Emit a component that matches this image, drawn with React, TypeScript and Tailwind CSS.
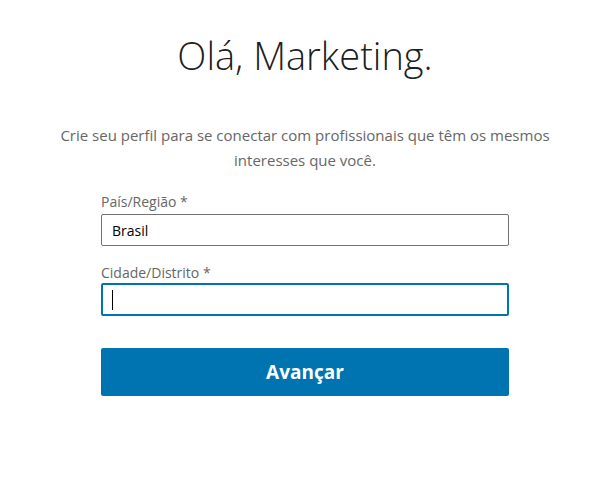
export default function App() {
  return (
    <div className="min-h-[489px] w-full bg-white font-['Open_Sans',sans-serif]">
      <div className="mx-auto flex flex-col items-center pt-[31px]">
        <h1 className="text-[38px] leading-[48px] font-light text-[#000000e6]">Olá, Marketing.</h1>
        <p className="mt-[44px] w-[500px] text-center text-[15px] leading-[25px] text-[#666]">
          Crie seu perfil para se conectar com profissionais que têm os mesmos interesses que você.
        </p>
        <form className="mt-[19px] flex w-[408px] flex-col">
          <label className="text-[14px] leading-[20px] text-[#666]">País/Região *</label>
          <div className="mt-[2px] flex h-[32px] items-center rounded-[2px] border border-[#737373] px-[10px] text-[14px] text-black">
            Brasil
          </div>
          <label className="mt-[17px] text-[14px] leading-[20px] text-[#666]">Cidade/Distrito *</label>
          <div className="flex h-[33px] items-center rounded-[2px] border-2 border-[#0073b1] px-[9px]">
            <span className="h-[20px] w-px bg-black" />
          </div>
          <button
            type="button"
            className="mt-[32px] h-[48px] rounded-[2px] bg-[#0073b1] text-[19px] font-bold text-white"
          >
            Avançar
          </button>
        </form>
      </div>
    </div>
  );
}
